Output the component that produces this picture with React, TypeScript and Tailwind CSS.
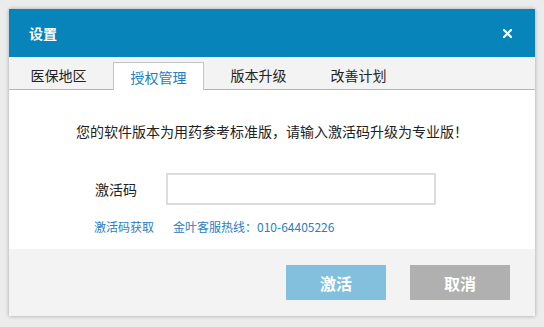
import React from "react";

const font = { fontFamily: '"Microsoft YaHei", "Noto Sans CJK SC", "Noto Sans", sans-serif' };

export default function App() {
  const tabs = ["医保地区", "授权管理", "版本升级", "改善计划"];
  return (
    <div className="w-[544px] h-[327px] bg-[#ececec] pt-[9px] pl-[9px]" style={font}>
      <div className="w-[526px] h-[307px] flex flex-col bg-white shadow-[0_0_4px_rgba(0,0,0,0.3)]">
        {/* header */}
        <div className="h-[48px] bg-[#0784ba] flex items-center justify-between pl-[20px] pr-[23px]">
          <span className="text-white text-[14px] font-bold leading-[20px]">设置</span>
          <svg width="9" height="9" viewBox="0 0 9 9">
            <path d="M1 1 L8 8 M8 1 L1 8" stroke="#fff" strokeWidth="2.2" strokeLinecap="square" />
          </svg>
        </div>
        {/* tabs */}
        <div className="h-[33px] bg-[#f3f3f3] border-b border-[#b4b4b4] flex items-end pl-[4px] gap-[9px]">
          {tabs.map((t, i) =>
            i === 1 ? (
              <div
                key={t}
                className="w-[91px] h-[28px] -mb-px bg-white border border-b-0 border-[#c4c4c4] flex items-center justify-center text-[14px] leading-[20px] text-[#1a80c2]"
              >
                {t}
              </div>
            ) : (
              <div
                key={t}
                className="w-[91px] h-[28px] flex items-center justify-center text-[14px] leading-[20px] text-[#222]"
              >
                {t}
              </div>
            )
          )}
        </div>
        {/* body */}
        <div className="h-[159px] bg-white flex flex-col pt-[31px]">
          <div className="text-center text-[14px] leading-[20px] text-[#222]">
            您的软件版本为用药参考标准版，请输入激活码升级为专业版！
          </div>
          <div className="flex items-center mt-[32px] pl-[86px]">
            <span className="w-[71px] text-[14px] leading-[20px] text-[#222]">激活码</span>
            <input className="w-[270px] h-[32px] border-2 border-[#dcdcdc] outline-none bg-white" />
          </div>
          <div className="flex items-center mt-[14px] pl-[85px] gap-[19px] text-[12px] leading-[16px] text-[#2a80c0]">
            <span>激活码获取</span>
            <span>金叶客服热线：010-64405226</span>
          </div>
        </div>
        {/* footer */}
        <div className="flex-1 bg-[#f3f3f3] flex justify-end items-start pt-[16px] pr-[25px] gap-[24px]">
          <button className="w-[100px] h-[35px] bg-[#82c0dd] text-white text-[16px] font-bold leading-[20px]">激活</button>
          <button className="w-[100px] h-[35px] bg-[#b0b0b0] text-white text-[16px] font-bold leading-[20px]">取消</button>
        </div>
      </div>
    </div>
  );
}
